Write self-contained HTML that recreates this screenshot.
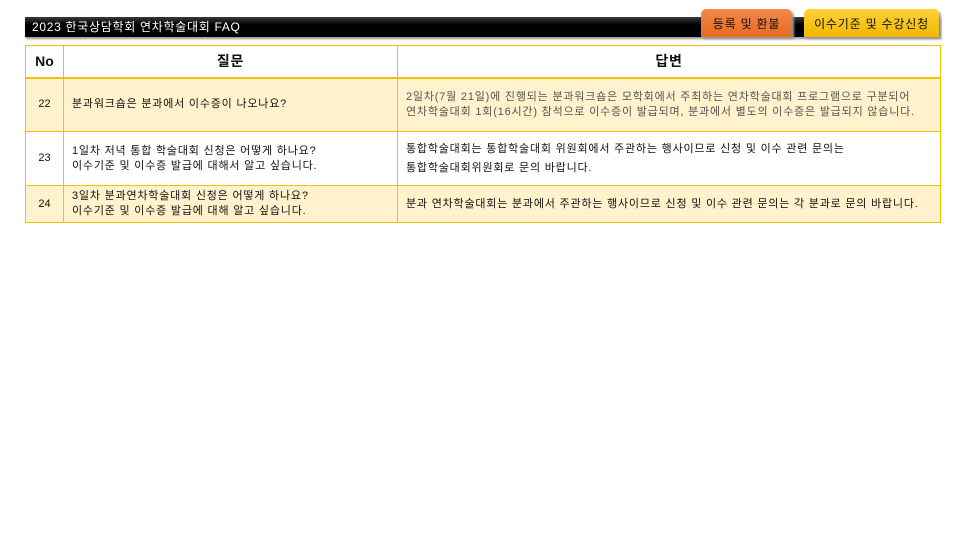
<!DOCTYPE html>
<html><head><meta charset="utf-8"><style>
body{margin:0;width:960px;height:540px;background:#fff;position:relative;font-family:"Liberation Sans","Noto Sans CJK KR",sans-serif;overflow:hidden}
.a{position:absolute;white-space:nowrap}
.bar{left:25px;top:17px;width:915px;height:20px;background:linear-gradient(#3a3a3a,#000 40%,#000);box-shadow:1px 2px 2px #999}
.tab{top:9px;height:28px;border-radius:5px 5px 0 0;font-size:12px;line-height:30px;text-align:center;color:#111;box-shadow:2px 2px 2px #999;letter-spacing:0.8px}
table{position:absolute;left:25px;top:45px;border-collapse:collapse;width:916px;table-layout:fixed;font-size:11px;color:#111;letter-spacing:0.8px}
td{border:1px solid #f5c000;padding:0 0 0 8px;line-height:15px;white-space:nowrap;overflow:hidden}
.y td{background:#fff2cc}
</style></head><body>
<div class="a bar"></div>
<div class="a" style="left:32px;top:19px;font-size:12px;color:#fff;line-height:17px;letter-spacing:0.7px">2023 한국상담학회 연차학술대회 FAQ</div>
<div class="a tab" style="left:701px;width:91px;background:linear-gradient(#f4884a,#e86a20)">등록 및 환불</div>
<div class="a tab" style="left:804px;width:135px;background:linear-gradient(#fcd23a,#f2b800)">이수기준 및 수강신청</div>
<table>
<colgroup><col style="width:38px"><col style="width:334px"><col></colgroup>
<tr style="height:32px;border-bottom:2px solid #f5c000"><td style="text-align:center;font-weight:bold;font-size:14px;padding:0;letter-spacing:0">No</td><td style="text-align:center;font-weight:bold;font-size:14px;padding:0">질문</td><td style="text-align:center;font-weight:bold;font-size:14px;padding:0">답변</td></tr>
<tr class="y" style="height:54px;border-top:2px solid #f5c000"><td style="text-align:center;padding:0;letter-spacing:0">22</td><td>분과워크숍은 분과에서 이수증이 나오나요?</td><td style="color:#555">2일차(7월 21일)에 진행되는 분과워크숍은 모학회에서 주최하는 연차학술대회 프로그램으로 구분되어<br>연차학술대회 1회(16시간) 참석으로 이수증이 발급되며, 분과에서 별도의 이수증은 발급되지 않습니다.</td></tr>
<tr style="height:54px"><td style="text-align:center;padding:0;letter-spacing:0">23</td><td>1일차 저녁 통합 학술대회 신청은 어떻게 하나요?<br>이수기준 및 이수증 발급에 대해서 알고 싶습니다.</td><td style="line-height:19px">통합학술대회는 통합학술대회 위원회에서 주관하는 행사이므로 신청 및 이수 관련 문의는<br>통합학술대회위원회로 문의 바랍니다.</td></tr>
<tr class="y" style="height:37px"><td style="text-align:center;padding:0;letter-spacing:0">24</td><td>3일차 분과연차학술대회 신청은 어떻게 하나요?<br>이수기준 및 이수증 발급에 대해 알고 싶습니다.</td><td>분과 연차학술대회는 분과에서 주관하는 행사이므로 신청 및 이수 관련 문의는 각 분과로 문의 바랍니다.</td></tr>
</table>
</body></html>
